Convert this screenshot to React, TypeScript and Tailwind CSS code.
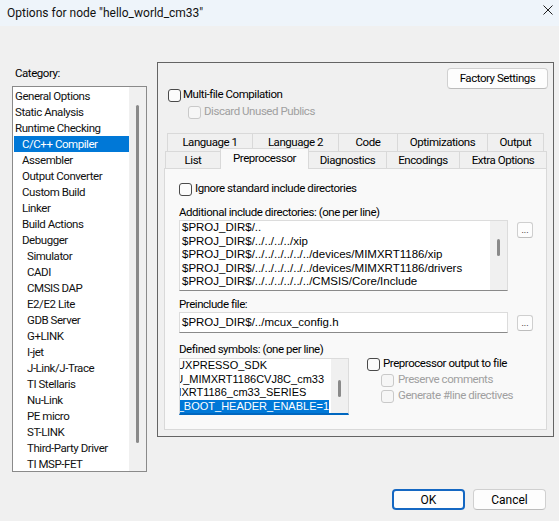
import React from "react";

const Check = ({ disabled = false }: { disabled?: boolean }) => (
  <span
    className={
      disabled
        ? "block w-[13px] h-[13px] rounded-[3px] border border-[#c9c9c9] bg-[#f6f6f6] shrink-0"
        : "block w-[13px] h-[13px] rounded-[3px] border border-[#4a4a4a] bg-[#fbfbfb] shrink-0"
    }
  />
);

const Dots = ({ extra }: { extra: string }) => (
  <div
    className={
      "w-[16px] h-[16px] rounded-[3px] border border-[#cfcfcf] border-b-[#bdbdbd] bg-[#fdfdfd] flex items-end justify-center pb-[2px] text-[9px] leading-none tracking-normal text-black ml-[9px] " +
      extra
    }
  >
    ...
  </div>
);

const cats: [string, number][] = [
  ["General Options", 0],
  ["Static Analysis", 0],
  ["Runtime Checking", 0],
  ["C/C++ Compiler", 1],
  ["Assembler", 1],
  ["Output Converter", 1],
  ["Custom Build", 1],
  ["Linker", 1],
  ["Build Actions", 1],
  ["Debugger", 1],
  ["Simulator", 2],
  ["CADI", 2],
  ["CMSIS DAP", 2],
  ["E2/E2 Lite", 2],
  ["GDB Server", 2],
  ["G+LINK", 2],
  ["I-jet", 2],
  ["J-Link/J-Trace", 2],
  ["TI Stellaris", 2],
  ["Nu-Link", 2],
  ["PE micro", 2],
  ["ST-LINK", 2],
  ["Third-Party Driver", 2],
  ["TI MSP-FET", 2],
];

const indent = ["pl-[1px]", "pl-[8px]", "pl-[13px]"];

const includes = [
  "$PROJ_DIR$/..",
  "$PROJ_DIR$/../../../../xip",
  "$PROJ_DIR$/../../../../../../devices/MIMXRT1186/xip",
  "$PROJ_DIR$/../../../../../../devices/MIMXRT1186/drivers",
  "$PROJ_DIR$/../../../../../../CMSIS/Core/Include",
];

const symbols = [
  "MCUXPRESSO_SDK",
  "CPU_MIMXRT1186CVJ8C_cm33",
  "MIMXRT1186_cm33_SERIES",
];

export default function App() {
  return (
    <div className="w-[559px] h-[521px] bg-[#f0f0f0] flex flex-col font-['Roboto',sans-serif] text-[11.5px] tracking-[-0.45px] text-black overflow-hidden">
      {/* title bar */}
      <div className="h-[26px] bg-[#eef4fa] flex items-start justify-between pl-[7px] pr-[6px] shrink-0">
        <span className="text-[12px] tracking-normal leading-[16px] mt-[5px] text-[#111]">
          Options for node "hello_world_cm33"
        </span>
        <svg width="10" height="10" viewBox="0 0 10 10" className="mt-[5px]">
          <path d="M0.5 0.5L9.5 9.5M9.5 0.5L0.5 9.5" stroke="#1f1f1f" strokeWidth="1" />
        </svg>
      </div>

      <div className="flex">
        {/* left column */}
        <div className="ml-[12px] w-[135px] pt-[39px] flex flex-col">
          <div className="h-[16px] leading-[16px] pl-[3px]">Category:</div>
          <div className="mt-[5px] h-[386px] border border-[#8a8a8a] bg-white flex">
            <div className="w-[116px] pt-[1px] pl-[1px] flex flex-col">
              {cats.map(([t, lvl]) => (
                <div
                  key={t}
                  className={
                    "h-[16px] leading-[16px] whitespace-nowrap " +
                    indent[lvl] +
                    (t === "C/C++ Compiler" ? " bg-[#0078d7] text-white" : " text-[#111]")
                  }
                >
                  {t}
                </div>
              ))}
            </div>
            <div className="flex-1 bg-[#f0f0f0] flex justify-center pt-[18px]">
              <div className="w-[3px] h-[338px] rounded-full bg-[#8a8a8a]" />
            </div>
          </div>
        </div>

        {/* group box */}
        <div className="mt-[36px] ml-[10px] w-[397px] h-[375px] border border-[#646464] px-[6px] pt-[5px] flex flex-col">
          <div className="flex justify-end mr-[-1px]">
            <div className="w-[101px] h-[21px] rounded-[4px] border border-[#d0d0d0] border-b-[#bcbcbc] bg-[#fdfdfd] flex items-center justify-center">
              Factory Settings
            </div>
          </div>
          <div className="mt-[-2px] h-[16px] ml-[4px] flex items-center gap-[2px]">
            <Check />
            <span>Multi-file Compilation</span>
          </div>
          <div className="mt-[1px] h-[16px] ml-[24px] flex items-center gap-[3px] text-[#a0a0a0]">
            <Check disabled />
            <span>Discard Unused Publics</span>
          </div>

          {/* tabs */}
          <div className="mt-[13px] flex flex-col">
            <div className="ml-[3px] h-[18px] flex">
              <div className="w-[85px] border-t border-l border-[#d9d9d9] bg-[#f0f0f0] text-center leading-[17px]">Language 1</div>
              <div className="w-[86px] border-t border-l border-[#d9d9d9] bg-[#f0f0f0] text-center leading-[17px]">Language 2</div>
              <div className="w-[59px] border-t border-l border-[#d9d9d9] bg-[#f0f0f0] text-center leading-[17px]">Code</div>
              <div className="w-[90px] border-t border-l border-[#d9d9d9] bg-[#f0f0f0] text-center leading-[17px]">Optimizations</div>
              <div className="w-[57px] border-t border-l border-r border-[#d9d9d9] bg-[#f0f0f0] text-center leading-[17px]">Output</div>
            </div>
            <div className="ml-[1px] h-[17px] flex relative z-10">
              <div className="w-[55px] border-t border-l border-[#d9d9d9] bg-[#f0f0f0] text-center leading-[16px]">List</div>
              <div className="w-[89px] -mt-[3px] h-[21px] border-t border-l border-r border-[#d9d9d9] bg-[#f9f9f9] text-center leading-[19px]">Preprocessor</div>
              <div className="w-[77px] border-t border-[#d9d9d9] bg-[#f0f0f0] text-center leading-[16px]">Diagnostics</div>
              <div className="w-[73px] border-t border-l border-[#d9d9d9] bg-[#f0f0f0] text-center leading-[16px]">Encodings</div>
              <div className="w-[88px] border-t border-l border-r border-[#d9d9d9] bg-[#f0f0f0] text-center leading-[16px]">Extra Options</div>
            </div>
            <div className="h-[262px] border border-[#d9d9d9] bg-[#f9f9f9] pl-[14px] flex flex-col">
              <div className="mt-[12px] h-[16px] flex items-center gap-[3px]">
                <Check />
                <span>Ignore standard include directories</span>
              </div>
              <div className="mt-[7px] h-[16px] leading-[16px]">Additional include directories: (one per line)</div>
              <div className="flex items-start">
                <div className="w-[329px] h-[71px] bg-white border border-[#dcdcdc] border-b-[#8a8a8a] flex">
                  <div className="flex-1 min-w-0 pl-[2px] font-['Liberation_Sans',sans-serif] text-[11.5px] tracking-normal leading-[13.5px] whitespace-nowrap overflow-hidden">
                    {includes.map((l) => (
                      <div key={l}>{l}</div>
                    ))}
                  </div>
                  <div className="w-[17px] shrink-0 bg-[#f0f0f0] flex justify-center pt-[18px]">
                    <div className="w-[3px] h-[17px] rounded-full bg-[#8a8a8a]" />
                  </div>
                </div>
                <Dots extra="mt-[2px]" />
              </div>
              <div className="mt-[5px] h-[16px] leading-[16px]">Preinclude file:</div>
              <div className="flex items-start">
                <div className="w-[329px] h-[21px] bg-white border border-[#dcdcdc] border-b-[#8a8a8a] pl-[2px] flex items-center font-['Liberation_Sans',sans-serif] text-[11.5px] tracking-normal">
                  $PROJ_DIR$/../mcux_config.h
                </div>
                <Dots extra="mt-[3px]" />
              </div>
              <div className="flex items-start">
                <div className="flex flex-col">
                  <div className="mt-[8px] h-[16px] leading-[16px]">Defined symbols: (one per line)</div>
                  <div className="mt-[1px] w-[170px] h-[57px] bg-white border border-[#dcdcdc] border-b-2 border-b-[#0067c0] flex">
                    <div className="flex-1 min-w-0 overflow-hidden font-['Liberation_Sans',sans-serif] text-[11px] tracking-normal leading-[13.5px] whitespace-nowrap">
                      <div className="ml-[-20px]">
                        {symbols.map((l) => (
                          <div key={l}>{l}</div>
                        ))}
                        <div>
                          <span className="inline-block bg-[#0078d7] text-white leading-[13px]">
                            XIP_BOOT_HEADER_ENABLE=1
                          </span>
                        </div>
                      </div>
                    </div>
                    <div className="w-[17px] shrink-0 bg-[#f0f0f0] flex justify-center pt-[21px]">
                      <div className="w-[3px] h-[17px] rounded-full bg-[#8a8a8a]" />
                    </div>
                  </div>
                </div>
                <div className="ml-[18px] pt-[23px] flex flex-col">
                  <div className="h-[16px] flex items-center gap-[3px]">
                    <Check />
                    <span>Preprocessor output to file</span>
                  </div>
                  <div className="h-[16px] ml-[14px] flex items-center gap-[4px] text-[#a0a0a0]">
                    <Check disabled />
                    <span>Preserve comments</span>
                  </div>
                  <div className="h-[16px] ml-[14px] flex items-center gap-[4px] text-[#a0a0a0]">
                    <Check disabled />
                    <span>Generate #line directives</span>
                  </div>
                </div>
              </div>
            </div>
          </div>
        </div>
      </div>

      {/* bottom buttons */}
      <div className="mt-[17px] flex justify-end gap-[8px] pr-[13px]">
        <div className="w-[73px] h-[21px] rounded-[4px] border-2 border-[#1467c2] bg-[#fdfdfd] flex items-center justify-center text-[12px] tracking-normal">
          OK
        </div>
        <div className="w-[73px] h-[21px] rounded-[4px] border border-[#d0d0d0] border-b-[#bcbcbc] bg-[#fdfdfd] flex items-center justify-center text-[12px] tracking-normal">
          Cancel
        </div>
      </div>
    </div>
  );
}
